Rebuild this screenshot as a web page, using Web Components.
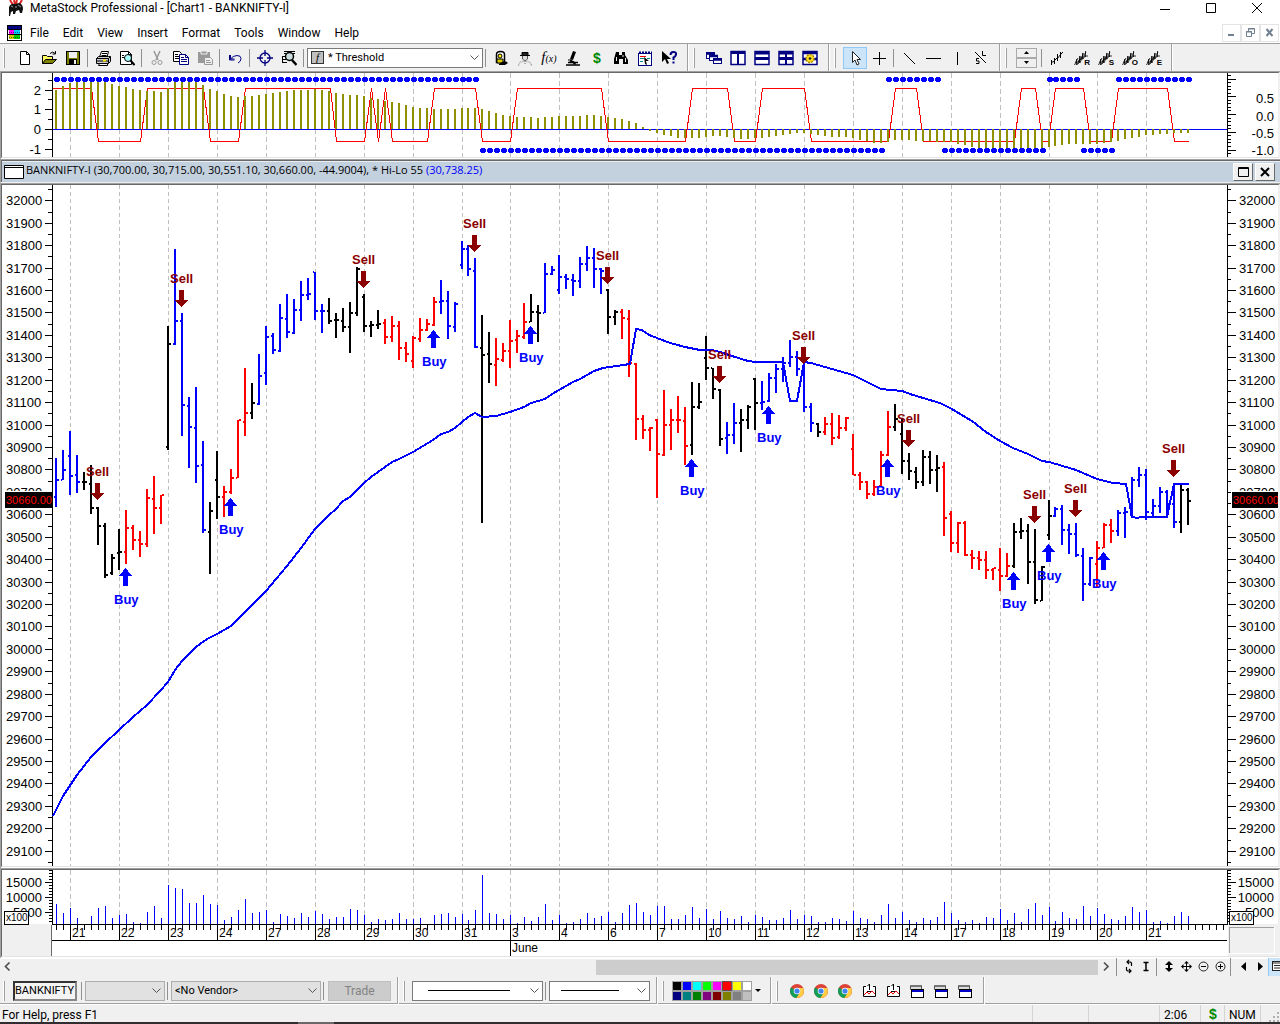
<!DOCTYPE html>
<html lang="en">
<head>
<meta charset="utf-8">
<title>MetaStock Professional - [Chart1 - BANKNIFTY-I]</title>
<style>
  html, body { margin: 0; height: 100%; background: #f0f0f0; }
  body { font: 12px/16px Roboto, "Open Sans", sans-serif; color: #000; overflow: hidden; }
</style>
</head>
<body>
<ms-app>
  <ms-title slot="head">MetaStock Professional - [Chart1 - BANKNIFTY-I]</ms-title>
  <ms-menu slot="head"></ms-menu>
  <ms-toolbar slot="head"></ms-toolbar>
  <ms-frame><ms-indicator></ms-indicator></ms-frame>
  <ms-caption>BANKNIFTY-I (30,700.00, 30,715.00, 30,551.10, 30,660.00, -44.9004), * Hi-Lo 55 <span slot="value">(30,738.25)</span></ms-caption>
  <ms-frame grow><ms-price></ms-price></ms-frame>
  <ms-frame><ms-volume></ms-volume></ms-frame>
  <ms-scroll></ms-scroll>
  <ms-orderbar></ms-orderbar>
  <ms-status>For Help, press F1</ms-status>
</ms-app>

<script>
const ICONS = {
  logo: '<path d="M2 0l3 5M6 0l1 4M9 0l-1 4M14 0l-3 5" stroke="#d22" stroke-width="2"/><path d="M1 7q2-4 6-3l4-1q4 1 4 6l-1 4h-2l-1-3-3 1-1 3H5l0-3-2 1-1 4H1z" fill="#111"/><path d="M3 6l2 1M10 5l3 2M7 7h2" stroke="#999"/>',
  chartdoc: '<rect x=".5" y=".5" width="14" height="15" fill="#fff" stroke="#000"/><rect x="1" y="1" width="13" height="3" fill="#000080"/><rect x="2" y="5" width="5" height="4" fill="#f0f"/><rect x="7" y="5" width="6" height="4" fill="#0cf"/><rect x="2" y="10" width="5" height="4" fill="#cc0"/><rect x="7" y="10" width="6" height="4" fill="#0c0"/><path d="M1 9.500h13M1 4.500h13" stroke="#000"/><path d="M2 7.500h11M2 12.500h11" stroke="#0008" stroke-dasharray="1 1"/>',
  new: '<path d="M3.500 1.500h6l3 3v10h-9z" fill="#fff" stroke="#000"/><path d="M9.500 1.500v3h3" fill="none" stroke="#000"/>',
  open: '<path d="M1.500 13.500v-8h4l1 1h5v3" fill="#ff6" stroke="#000"/><path d="M1.500 13.500l3-4h11l-4 4z" fill="#808000" stroke="#000"/><path d="M9 3.500q3-3 5 0M14.500 1v3h-3" fill="none" stroke="#000"/>',
  save: '<rect x="1.500" y="1.500" width="13" height="13" fill="#808000" stroke="#000"/><rect x="4" y="2" width="8" height="6" fill="#f0f0f0"/><rect x="4" y="9" width="8" height="5" fill="#000"/><rect x="9" y="10" width="2" height="4" fill="#f0f0f0"/>',
  print: '<path d="M4.500 7l2-5.500h7L12 7" fill="#fff" stroke="#000"/><path d="M7 3.500h5M6.500 5.500h5" stroke="#000"/><path d="M1.500 8.500l2-2h10l2 0v5l-2 2h-12z" fill="#ccc" stroke="#000"/><path d="M1.500 8.500h12v5M13.500 8.500l2-2M2 11h12" fill="none" stroke="#000"/><path d="M4.500 13.500h8v2h-9z" fill="#fff" stroke="#000"/><path d="M8 10.500h3" stroke="#fd0" stroke-width="2"/>',
  preview: '<path d="M1.500 1.500h8l3 3v10h-11z" fill="#fff" stroke="#000"/><path d="M9.500 1.500v3h3M3 5.500h2M3 7.500h2" fill="none" stroke="#000"/><circle cx="9" cy="8" r="3.500" fill="#aff" stroke="#000"/><path d="M11.500 10.500l4 4.500" stroke="#000" stroke-width="2"/>',
  cut: '<path d="M5 1l4 9M11 1L7 10" stroke="#999" stroke-width="1.500"/><circle cx="5" cy="12.500" r="2" fill="none" stroke="#999"/><circle cx="11" cy="12.500" r="2" fill="none" stroke="#999"/>',
  copy: '<path d="M.500 1.500h6l2 2v8h-8z" fill="#fff" stroke="#000"/><path d="M2 4.500h3M2 6.500h4M2 8.500h4" stroke="#000"/><path d="M6.500 4.500h6l3 3v7h-9z" fill="#fff" stroke="#000080"/><path d="M12.500 4.500v3h3M8 7.500h3M8 9.500h6M8 11.500h6" fill="none" stroke="#000080"/>',
  paste: '<path d="M1 2h12v11H1z" fill="#999"/><path d="M4 1h6v3H4z" fill="#999" stroke="#eee"/><path d="M7.500 7.500h6l2 2v5h-8z" fill="#eee" stroke="#999"/><path d="M9 10.500h4M9 12.500h5" stroke="#999"/>',
  undo: '<path d="M2.500 5v5h5" fill="none" stroke="#000080"/><path d="M3.500 5v4h4M3 9.500Q6 5.500 10 5.500q4 0 4 3 0 3-3 4.500" fill="none" stroke="#000080"/>',
  cross: '<circle cx="8" cy="8" r="5" fill="none" stroke="#000080" stroke-width="1.300"/><path d="M8 0v6M8 10v6M0 8h6M10 8h6" stroke="#000080" stroke-width="1.300"/>',
  find: '<path d="M3 1.500h11M3 3.500h2M12 3.500h2M1 6.500h3M1 9.500h4M1 12.500h5M1.500 6v7" stroke="#000"/><circle cx="8.500" cy="6.500" r="4" fill="#cdd" stroke="#000" stroke-width="1.500"/><path d="M11 10l4.500 5" stroke="#000" stroke-width="2.500"/>',
  expert: '<path d="M3.500 12.500V4.500q0-3 4-3t4 3v8z" fill="#fff" stroke="#000" stroke-width="1.500"/><circle cx="7" cy="6" r="2" fill="#fe0" stroke="#000"/><path d="M4 13V9h6v4z" fill="#dc0" stroke="#000"/><path d="M6 14q6-5 9-1l-3 2H6z" fill="#000"/>',
  person: '<path d="M3 5.500h10M5 5V2.500h6V5" stroke="#000" fill="#222"/><path d="M5.500 6v3l2.500 2 2.500-2V6" fill="#ddd" stroke="#555"/><path d="M1.500 15.500q1-4 4-4h5q3 0 4 4M8 11v4" fill="none" stroke="#999" stroke-dasharray="1 1" stroke-width="1.500"/>',
  micro: '<path d="M8 1l3 1-3 8-3-1z" fill="#000"/><path d="M3 12.500h10M1 15h14" stroke="#000" stroke-width="1.500"/><path d="M5 10.500q5 2 5 4" stroke="#000" stroke-width="2" fill="none"/><path d="M3 10h4" stroke="#000"/>',
  binoc: '<path d="M3 2h3v3h3V2h3v3l3 5v4h-5V9H6v5H1V9z" fill="#000"/><path d="M3.500 7v4M10 5v2M12.500 8v4" stroke="#eee"/>',
  report: '<rect x="1.500" y="3.500" width="13" height="12" fill="#fff" stroke="#000080"/><path d="M2 2.500h13" stroke="#000080" stroke-width="2" stroke-dasharray="2 1"/><path d="M3 6.500h6" stroke="#e00"/><path d="M3 8.500h4M10 8.500h3M3 11.500h3" stroke="#088"/><path d="M7 7l5 4H9l1 4-2-1z" fill="#000"/>',
  help: '<path d="M1 1v11l3-3 2 5 2-1-2-4h4z" fill="#000"/><path d="M9.500 5q0-3 3-3t2.500 2.500-2.500 3V10M12.500 11.500v2" stroke="#000080" stroke-width="2" fill="none"/>',
  cascade: '<g fill="#fff" stroke="#000080"><rect x=".5" y="2.500" width="8" height="6"/><rect x="3.500" y="5.500" width="8" height="5"/><rect x="7.500" y="8.500" width="8" height="5"/></g><path d="M0 3.500h9M3 6h9M7 9.500h9" stroke="#000080" stroke-width="2.500"/>',
  vert: '<rect x="1" y="1.500" width="14" height="13" fill="#fff" stroke="#000080" stroke-width="1.500"/><path d="M1 3h14M8 2v13" stroke="#000080" stroke-width="2"/>',
  horiz: '<rect x="1" y="1.500" width="14" height="13" fill="#fff" stroke="#000080" stroke-width="1.500"/><path d="M1 3h14M1 8.500h14" stroke="#000080" stroke-width="3"/>',
  grid: '<rect x="1" y="1.500" width="14" height="13" fill="#fff" stroke="#000080" stroke-width="1.500"/><path d="M1 3h14M1 8.500h14" stroke="#000080" stroke-width="3"/><path d="M8 2v13" stroke="#000080" stroke-width="2"/>',
  gear: '<rect x="1" y="1.500" width="14" height="13" fill="#fff" stroke="#000080" stroke-width="1.500"/><path d="M1 3h14M1 9h14" stroke="#000080" stroke-width="2.500"/><circle cx="8" cy="8.500" r="4" fill="#fd2" stroke="#a80" stroke-width="1.500" stroke-dasharray="2 1"/><circle cx="8" cy="8.500" r="1.300" fill="#222"/>',
  pointer: '<path d="M5.500 1.500v11l2.500-2.500 2 5 2-1-2-4.500h3.500z" fill="#fff" stroke="#222"/>',
  plus: '<path d="M8.500 2v13M2 8.500h13" stroke="#000"/>',
  diag: '<path d="M3 3l11 11" stroke="#000"/>', dash: '<path d="M1 8.500h15" stroke="#000"/>', bar: '<path d="M8.500 2v13" stroke="#000"/>',
  sl: '<path d="M2 2l11 11M9.500 1v4.500h3.500" stroke="#000" fill="none"/><path d="M6 8.500H3.500v2.500H6v2.500H3" stroke="#000" fill="none"/>',
  trend: '<path d="M2.500 15v-5M2 12.500l3-1M5.500 14V8M8.500 11V4M5 11l3-3M8 9l4-5M11.500 8V2M11 5l3-3" stroke="#000" fill="none"/>',
  trends: '<path d="M1.500 15L5 8M4 15l4-9M7 13l3-8M3.500 15V9M6.500 13V6M9.500 9V3M12.500 7V1M2 12h3l2-3h3l2-3h3M10 8l3-6M5 14l6-11" stroke="#000" stroke-width=".8" fill="none"/>',
  chrome: '<circle cx="8" cy="8" r="7" fill="#db4437"/><path d="M8 8L1.900 4.600A7 7 0 0 0 7.500 15l3.500-6z" fill="#0f9d58"/><path d="M8 8h-1l4 1-3.500 6A7 7 0 0 0 14.200 5H8z" fill="#ffcd40"/><circle cx="8" cy="8" r="3.300" fill="#fff"/><circle cx="8" cy="8" r="2.600" fill="#4285f4"/>',
  chartbox: '<path d="M5 3.500H2.500v10h12v-10H12" fill="#fff" stroke="#000"/><path d="M8.500 1v6M6.500 3l2-2M6 8.500h5" stroke="#000" fill="none"/><path d="M3 12l3-3 2 2 3-3 3 3" stroke="#e00" fill="none"/>',
  win: '<path d="M1.500 2.500h11v4h-11z" fill="#ddd" stroke="#555"/><path d="M2 3h10" stroke="#777" stroke-width="2"/><rect x="2.500" y="6.500" width="12" height="8" fill="#fff" stroke="#000"/><path d="M3 8h11" stroke="#00c" stroke-width="2"/>',
  cycle: '<path d="M6.500 4h3l1 1v3M9.500 13h-3l-1-1V9M8 2l-2 2 2 2M8 11l2 2-2 2" fill="none" stroke="#000" stroke-width="1.200"/>',
  ibeam: '<path d="M5.500 4.500h5M5.500 12.500h5M8 4.500v8" stroke="#000" stroke-width="1.500"/>',
  updown: '<path d="M8 3l4 4H4zM8 14l4-4H4z" fill="#000"/><path d="M8 4v9" stroke="#000" stroke-width="2"/>',
  move: '<path d="M8.500 4v9M4 8.500h9" stroke="#000"/><path d="M8.500 3l2.500 2.500H6zM8.500 14l2.500-2.500H6zM3 8.500L5.500 6v5zM14 8.500L11.500 6v5z" fill="#000"/>',
  zoomout: '<circle cx="8.500" cy="8.500" r="4.500" fill="none" stroke="#222"/><path d="M6 8.500h5" stroke="#000"/>',
  zoomin: '<circle cx="8.500" cy="8.500" r="4.500" fill="none" stroke="#222"/><path d="M6 8.500h5M8.500 6v5" stroke="#000"/>',
  left: '<path d="M11 4v9L6 8.500z" fill="#000"/>', right: '<path d="M6 4v9l5-4.500z" fill="#000"/>',
  props: '<rect x="3.500" y="3.500" width="12" height="9" fill="#fff" stroke="#222"/><path d="M3 5h13M5 7.500h9M5 10h9" stroke="#222"/>',
  chevleft: '<path d="M9.500 4.500l-4 4 4 4" fill="none" stroke="#505050" stroke-width="1.700"/>',
  chevright: '<path d="M6 4.500l4 4-4 4" fill="none" stroke="#505050" stroke-width="1.700"/>'
};
const svg = (name, size = 16) => `<svg viewBox="0 0 16 16" width="${size}" height="${size}" aria-hidden="true">${ICONS[name]}</svg>`;
const escapeHtml = s => s.replace(/&/g, '&amp;').replace(/</g, '&lt;').replace(/>/g, '&gt;');

class Base extends HTMLElement {
  constructor() { super(); this.attachShadow({ mode: 'open' }); }
  set html(v) { this.shadowRoot.innerHTML = v; }
}
const define = (name, cls) => customElements.define(name, cls);

define('ms-app', class extends Base {
  connectedCallback() { this.html = `<style>
    :host { display: flex; flex-direction: column; height: 100vh; min-height: 600px; }
  </style><slot name="head"></slot><slot></slot>`; }
});

define('ms-title', class extends Base {
  connectedCallback() { this.html = `<style>
    :host { display: flex; align-items: flex-start; height: 22px; background: #fff; padding-left: 8px; box-sizing: border-box; }
    .name { flex: 1; line-height: 16px; white-space: nowrap; margin-left: 6px; }
    svg { display: block; }
    button { width: 46px; height: 16px; padding: 0; border: 0; background: none; display: grid; place-items: center; }
  </style>${svg('logo')}<span class="name"><slot></slot></span>
  <button aria-label="Minimize"><svg width="11" height="11"><path d="M0 6.500h10" stroke="#000"/></svg></button>
  <button aria-label="Maximize"><svg width="11" height="11"><path d="M.5.5h9v9h-9z" fill="none" stroke="#000"/></svg></button>
  <button aria-label="Close"><svg width="11" height="11"><path d="M0 0l10 10M10 0L0 10" stroke="#000"/></svg></button>`; }
});

define('ms-menu', class extends Base {
  connectedCallback() {
    const items = ['File', 'Edit', 'View', 'Insert', 'Format', 'Tools', 'Window', 'Help'];
    this.html = `<style>
    :host { display: flex; align-items: center; height: 22px; box-sizing: border-box; background: #fff; border-bottom: 1px solid #a0a0a0; padding: 0 1px 0 7px; }
    svg { display: block; }
    nav { display: flex; flex: 1; gap: 14px; padding-left: 7px; }
    button { font: inherit; color: inherit; border: 0; background: none; padding: 0; }
    .w { width: 19px; height: 18px; border: 1px solid #e4e4e4; display: grid; place-items: center; box-sizing: border-box; }
  </style>${svg('chartdoc')}<nav>${items.map(i => `<button>${i}</button>`).join('')}</nav>
  <button class="w" aria-label="Minimize chart"><svg width="9" height="9"><path d="M1 7h6" stroke="#708090" stroke-width="2"/></svg></button>
  <button class="w" aria-label="Restore chart"><svg width="9" height="9"><path d="M2.500 3V.5h6v5H6M.5 3.500h5v5h-5zM0 4h6M2 1h7" fill="none" stroke="#708090"/></svg></button>
  <button class="w" aria-label="Close chart"><svg width="9" height="9"><path d="M1.500 1l6 7M7.500 1l-6 7" stroke="#708090" stroke-width="2"/></svg></button>`; }
});

/* One tool: a 24px wide button holding an icon, with an optional corner letter. */
define('ms-tool', class extends Base {
  connectedCallback() {
    const icon = this.getAttribute('icon'), w = this.getAttribute('w') || 24;
    this.html = `<style>
    :host { display: block; flex: none; width: ${w}px; height: 22px; }
    button { width: 100%; height: 100%; border: 0; padding: 0; background: none; display: grid; place-items: center; font: 13px/16px "Liberation Sans", sans-serif; color: #000; }
    :host([on]) button { background: #cce4f7; box-shadow: inset 0 0 0 1px #90c8f6; }
    svg, ::slotted(*) { grid-area: 1 / 1; }
    slot { display: contents; }
  </style><button aria-label="${icon}">${ICONS[icon] ? svg(icon) : ''}<slot></slot></button>`; }
});

define('ms-sep', class extends Base {
  connectedCallback() { this.html = `<style>
    :host { display: block; flex: none; width: 6px; height: 18px; box-sizing: border-box; }
    i { display: block; width: 1px; height: 100%; margin-left: 2px; background: #909090; }
  </style><i></i>`; }
});

/* Band edge: a full height line and the grip of the next band. */
define('ms-band', class extends Base {
  connectedCallback() { this.html = `<style>
    :host { display: flex; flex: none; width: 21px; align-self: stretch; align-items: center; box-sizing: border-box; padding-left: 6px; gap: 6px; }
    :host([first]) { width: 13px; padding-left: 4px; }
    :host([first]) .edge, :host([last]) .grip { display: none; }
    .edge { width: 1px; height: 100%; background: #a0a0a0; box-shadow: 1px 0 #fff; }
    .grip { width: 1px; height: 20px; background: #a0a0a0; box-shadow: -1px 0 #fff; }
  </style><i class="edge"></i><i class="grip"></i>`; }
});

/* Drop-down: the native select with a chevron and any slotted decoration laid in the same grid cell. */
define('ms-select', class extends Base {
  connectedCallback() {
    const g = n => this.getAttribute(n);
    this.html = `<style>
    :host { display: grid; flex: none; width: ${g('w')}px; height: 20px; align-items: center; }
    select, svg, ::slotted(*) { grid-area: 1 / 1; }
    select { appearance: none; width: 100%; height: 100%; margin: 0; border: 1px solid ${g('border') || '#7a7a7a'}; border-radius: 0; background: ${g('bg') || '#fff'};
      font: 11px/16px Roboto, sans-serif; color: #000; padding: 0 18px 0 ${g('pad') || 4}px; }
    svg { justify-self: end; margin-right: 4px; pointer-events: none; }
    ::slotted(*) { pointer-events: none; }
  </style><select aria-label="${g('label')}"><option>${escapeHtml(g('value') || '')}</option></select>
  <svg width="9" height="6"><path d="M.5.500l4 4 4-4" fill="none" stroke="#555"/></svg><slot></slot>`; }
});

const tools = (...names) => names.map(n => n === '|' ? '<ms-sep></ms-sep>' : `<ms-tool icon="${n}"></ms-tool>`).join('');

define('ms-toolbar', class extends Base {
  connectedCallback() {
    const tl = c => `<ms-tool icon="trends"><b>${c}</b></ms-tool>`;
    this.html = `<style>
    :host { display: flex; align-items: center; height: 27px; background: #f0f0f0; flex: none; }
    .f { width: 11px; height: 11px; margin-left: 4px; background: #c0c0c0; border: 1px solid #333; font: italic 11px/11px "Liberation Serif", serif; text-align: center; }
    .fx { font: italic 15px/16px "Liberation Serif", serif; }
    .fx small { font-size: 10px; }
    .dollar { font: bold 14px/16px "Liberation Sans", sans-serif; color: #008800; }
    b { font: bold 8px/8px "Liberation Sans", sans-serif; align-self: end; justify-self: end; margin: 0 3px 2px 0; }
    .spin { width: 21px; height: 20px; margin: 0 2px; display: flex; flex-direction: column; }
    .spin button { flex: 1; border: 1px solid #aaa; padding: 0; background: #f0f0f0; display: grid; place-items: center; }
  </style><ms-band first></ms-band>${tools('new', 'open', 'save', '|', 'print', 'preview', '|', 'cut', 'copy', 'paste', '|', 'undo', '|', 'cross', 'find', '|')}
  <ms-select w="176" pad="20" label="Template" value="* Threshold"><span class="f">f</span></ms-select><ms-sep></ms-sep>
  ${tools('expert', 'person')}<ms-tool icon="function"><span class="fx">f<small>(x)</small></span></ms-tool>${tools('micro')}<ms-tool icon="dollar"><span class="dollar">$</span></ms-tool>${tools('binoc', 'report', 'help')}
  <ms-band></ms-band>${tools('cascade', 'vert', 'horiz', 'grid', 'gear')}<ms-band></ms-band>
  <ms-tool icon="pointer" on></ms-tool>${tools('plus', '|', 'diag', 'dash', 'bar', 'sl')}<ms-band></ms-band>
  <div class="spin"><button aria-label="Up"><svg width="5" height="3"><path d="M0 3l2.500-3L5 3z"/></svg></button><button aria-label="Down"><svg width="5" height="3"><path d="M0 0l2.500 3L5 0z"/></svg></button></div><ms-sep></ms-sep>
  ${tools('trend')}${tl('R')}${tl('S')}${tl('O')}${tl('E')}<ms-band last></ms-band>`; }
});

define('ms-frame', class extends Base {
  connectedCallback() { this.html = `<style>
    :host { display: flex; flex: none; box-sizing: border-box; border-top: 1px solid #a0a0a0; border-left: 1px solid #a0a0a0; background: #fff; }
    :host([grow]) { flex: 1; min-height: 0; }
    div { display: flex; flex: 1; min-width: 0; border-top: 1px solid #696969; border-left: 1px solid #696969; border-bottom: 1px solid #e3e3e3; border-right: 2px solid #f0f0f0; margin-bottom: 1px; }
    ::slotted(*) { flex: 1; min-width: 0; }
  </style><div><slot></slot></div>`; }
});

define('ms-caption', class extends Base {
  connectedCallback() { this.html = `<style>
    :host { display: flex; flex: none; align-items: center; height: 24px; box-sizing: border-box; border-top: 1px solid #a0a0a0; border-bottom: 1px solid #f0f0f0; border-left: 1px solid #a0a0a0; background: #c3d0de; box-shadow: inset 0 1px #696969, inset 1px 0 #696969, inset 0 2px #e8eef4; padding: 1px 5px 0 3px; gap: 2px; }
    .doc { display: block; flex: none; }
    span { flex: 1; white-space: pre; font: 11px/16px "Open Sans", "Noto Sans", sans-serif; margin-top: -3px; }
    ::slotted(*) { color: #00f; }
    button { width: 20px; height: 18px; padding: 0; background: #f0f0f0; border: 1px solid; border-color: #fff #696969 #696969 #fff; display: grid; place-items: center; }
  </style><svg class="doc" width="20" height="14"><path d="M.5.500h19v13H.5zM0 2.500h20" fill="#fff" stroke="#000"/></svg>
  <span><slot></slot><slot name="value"></slot></span>
  <button aria-label="Maximize pane"><svg width="11" height="10"><path d="M.5.500h10v9H.5zM0 1.500h11" fill="none" stroke="#000"/></svg></button>
  <button aria-label="Close pane"><svg width="10" height="10"><path d="M1 1l8 8M9 1L1 9" stroke="#000" stroke-width="2"/></svg></button>`; }
});

/* ---------- chart data ---------- */
const BARS = 163;
/* High, low, open, close per bar, in thirds of a pixel below the pane's top. */
const PRICES = [
 [0, `b820,965,937,885 b795,884,884,855 b738,930,812,872 b810,924,870,890 k862,914,890,892 k840,986,898,970 k965,1080,970,1022 k1014,1178,1022,1170 k1106,1170,1165,1118 k1032,1155,1103,1100 r976,1136,1101,1028 r1020,1095,1028,1065 r1038,1115,1065,1077 r912,1086,1077,938 r873,1046,941,968 r930,1018,968,930 k424,795,786,477 b192,480,477,408 b384,752,408,660 b636,849,663,727 b606,893,729,842 b768,1044,839,1034 k950,1167,1040,977 k798,1002,884,936 r903,996,936,921 r852,928,921,879 r704,880,879,705 r549,752,710,684 k594,702,684,654 b507,659,657,573 b423,600,563,456 b444,507,453,495 b357,500,497,399 b327,459,402,440 b342,446,443,375 b288,408,375,329 b279,345,329,326 b260,405,260,378 b357,444,378,378 k339,416,378,408 k384,459,405,405 k369,440,408,426 k351,504,426,384 k246,392,384,252 k327,440,336,423 k408,456,423,420 k375,431,420,417 r402,476,414,456 r393,470,456,423 r408,525,423,489 r471,531,489,507 r453,549,528,459 r399,470,462,434 r402,437,434,417 r336,422,420,350 b285,386,350,348 b318,461,348,423 b350,440,426,356 b168,251,240,191 b180,273,191,251 b219,488,258,486 k390,1014,489,509 k440,594,507,537 r459,602,540,521 r474,530,525,498 r405,549,498,467 r435,503,465,453 r354,462,455,410 k327,412,410,381 k360,471,381,383 b234,385,383,267 b243,271,267,254 b210,327,315,275 b267,311,275,282 b267,333,285,288 b216,308,288,237 b183,257,237,218 b189,309,218,251 b249,327,251,258 k312,446,315,396 k375,420,396,380 r372,461,380,400 r375,575,402,535 r534,765,537,702`],
 [375, `r315,386,327,360 r351,423,360,354 r328,564,330,432 r240,437,435,345 r297,419,345,330 r258,369,330,330 r291,465,333,408 k216,434,405,291 k219,296,291,276 k78,209,144,174 k174,266,174,237 k237,407,240,387 b336,431,384,375 b279,402,375,339 k297,426,339,330 k285,356,330,291 k204,360,207,279 b213,300,279,276 b188,276,273,204 b162,249,204,177 b141,216,177,159 b90,170,159,141 b123,198,141,177 b165,305,177,291 b279,366,291,338 k339,381,341,366 r321,375,366,342 r309,405,342,384 r315,387,381,354 r321,363,354,324 r372,495,417,495 r486,540,495,516 r513,567,516,552 r510,558,552,531 r423,530,528,435 r303,437,435,350 k282,363,350,327 k327,492,372,453 k429,510,453,483 k471,537,486,516 k420,528,516,441 k423,522,441,480 k435,546,480,474`],
 [585, `r246,467,260,414 r393,516,402,489 r426,518,488,428 r423,528,428,524 r510,567,524,535 r513,570,535,540 r513,597,540,570 r563,600,570,564 r504,633,570,588 r519,591,588,558 k429,564,558,456 k414,477,456,453 k432,612,453,546 k447,671,546,660 k558,663,662,560 k360,480,465,408 b381,411,408,387 b375,495,387,450 b432,522,450,462 b429,531,462,525 b504,663,528,612 b531,617,612,534 r483,624,552,504 r429,505,504,435 r417,489,435,453 b390,468,453,399 b381,474,399,396 b291,411,405,300 b261,321,300,285 b267,420,285,396 b357,414,400,378 b321,399,378,336 b330,405,336,372 b312,444,372,426 k312,459,426,330 k324,435,330,363`]
].flatMap(([base, s]) => s.split(' ').map(t => [t[0], ...t.slice(1).split(',').map(v => (+v + base) / 3)]));

const HILO = '53,815 63,795 77,774 91,756 105,742 119,729 133,716 147,704 161,689 168,681 175,669 182,660 196,646 207,638 217,633 231,625 245,611 266,590 287,565 301,547 315,528 329,514 336,508 343,500 350,496 364,482 371,476 392,461 399,458 413,451 433,439 441,433 448,431 455,427 468,416 475,412 482,416 496,415 510,411 524,406 531,402 545,398 552,393 559,389 573,381 580,378 594,370 603,367 630,363 636,328 642,329 649,334 657,337 670,342 685,346 700,349 712,349 720,351 735,356 748,360 756,361 783,361 790,400 797,400 804,361 811,362 853,374 881,388 902,390 913,394 940,402 950,407 972,420 986,431 1000,440 1013,447 1028,453 1042,460 1049,461 1056,463 1076,469 1097,478 1113,482 1126,483 1132,516 1138,517 1140,516 1167,516 1174,483 1189,483'.split(' ').map(p => p.split(',').map(Number));

const HIST = [60,48,39,33,30,27,30,36,42,48,51,57,60,63,63,66,54,36,30,33,36,45,57,63,72,78,81,78,78,75,72,69,66,63,60,60,60,57,60,63,69,72,75,75,78,84,87,93,96,99,105,111,114,114,117,117,117,117,114,114,114,117,123,129,135,138,141,141,141,144,141,141,138,138,138,138,135,135,138,141,144,147,153,159,171,182,189,194,198,204,204,204,204,201,198,198,201,204,207,207,204,204,201,198,195,192,189,189,192,195,198,201,201,201,204,210,213,219,218,216,210,210,210,213,213,213,216,216,216,222,225,231,234,237,240,243,243,240,243,240,240,237,231,228,225,222,222,222,222,222,219,216,213,207,204,201,195,195,192,192,189,189,189].map(v => v / 3 - 3);

const VOL = [162,189,174,204,222,198,174,168,204,195,192,216,219,186,168,204,105,114,117,159,159,135,162,165,210,201,180,147,189,186,180,216,192,198,204,189,201,183,192,207,201,201,177,180,195,216,207,210,207,189,207,207,204,222,195,192,189,201,192,210,180,75,189,192,207,195,219,201,213,201,162,210,195,219,216,207,189,204,198,186,216,189,165,159,186,195,168,168,207,207,195,171,204,177,207,183,204,207,198,216,195,201,210,210,204,180,207,195,198,216,216,204,207,213,183,204,207,216,195,162,204,186,210,216,204,210,201,156,189,210,216,210,219,201,204,177,210,189,216,177,159,195,171,213,186,204,207,168,198,174,192,207,210,198,171,186,180,216,213,219,198,186,198].map(v => (222 - v) / 3);

const DAYS = ['21','22','23','24','27','28','29','30','31','3','4','6','7','10','11','12','13','14','17','18','19','20','21'];
const COLORS = { b: '#0000ff', k: '#000000', r: '#ff0000' };
const FONT = 'font-family="Liberation Sans, sans-serif"';

const rect = (x, y, w, h, c) => `<rect x="${x}" y="${y}" width="${w}" height="${h}" fill="${c}"/>`;
const text = (x, y, s, extra = '') => `<text x="${x}" y="${y}" font-size="13" ${FONT} ${extra}>${s}</text>`;
const line = (pts, c, w = 1) => `<polyline points="${pts.map(p => p.join(',')).join(' ')}" fill="none" stroke="${c}" stroke-width="${w}"/>`;

/* A pane that redraws itself for its own size. Coordinates start at the pane's inner left edge. */
class Pane extends Base {
  connectedCallback() {
    this.html = `<style>:host { display: block; height: ${this.constructor.h || 'auto'}; min-height: 0; overflow: hidden; } svg { display: block; }</style><svg></svg>`;
    this.svg = this.shadowRoot.querySelector('svg');
    new ResizeObserver(() => this.redraw()).observe(this);
    this.redraw();
  }
  redraw() {
    const W = this.clientWidth, H = this.clientHeight;
    if (!W || !H) return;
    this.svg.setAttribute('width', W);
    this.svg.setAttribute('height', H);
    this.L = 50; this.R = W - 51;
    this.pitch = (this.R - this.L) * 6.9881 / 1175;
    this.svg.innerHTML = this.draw(W, H);
  }
  x(i) { return Math.floor(this.L + 4.700 + this.pitch * i); }
  grid(h, dash) {
    return DAYS.map((d, k) => `<path d="M${this.x(2 + 7 * k) + .5} 0V${h}" stroke="#c0c0c0" stroke-dasharray="${dash}"/>`).join('');
  }
  crisp(s) { return `<g shape-rendering="crispEdges">${s}</g>`; }
  sx(px) { return this.L + (px - 52) * (this.R - this.L) / 1175; }
}

define('ms-indicator', class extends Pane {
  static h = '84px';
  draw(W, H) {
    let s = this.grid(H, '5 3'), t = '';
    const hi = 15.500, lo = 68.500;
    const red = [[52,0],[91,0],[98,1],[140,1],[147,0],[203,0],[210,1],[238,1],[245,0],[330,0],[336,1],[364,1],[371,0],[378,1],[385,0],[392,1],[427,1],[434,0],[475,0],[482,1],[510,1],[517,0],[601,0],[608,1],[685,1],[692,0],[727,0],[734,1],[755,1],[762,0],[804,0],[811,1],[888,1],[895,0],[916,0],[923,1],[1014,1],[1021,0],[1035,0],[1042,1],[1048,1],[1055,0],[1083,0],[1090,1],[1111,1],[1118,0],[1167,0],[1174,1],[1188,1]];
    s += rect(this.L, 56, this.R - this.L, 1, '#0000ff');
    s += line(red.map(([x, v]) => [this.sx(x) + .5, v ? lo : hi]), '#ff0000');
    HIST.forEach((v, i) => { const y = Math.round(v), z = 56; s += rect(this.x(i) - 1, Math.min(y, z), 2, Math.max(1, Math.abs(z - y)), '#909000'); });
    let dots = '';
    const top = i => i <= 60 || (i >= 119 && i <= 126) || (i >= 142 && i <= 146) || i >= 152;
    for (let i = 0; i < BARS; i++) dots += rect(this.x(i) - 1, top(i) ? 4 : 75, 4, 5, '#00f') + rect(this.x(i) - 2, top(i) ? 5 : 76, 6, 3, '#00f');
    s += dots + rect(this.L, 0, 1, H, '#000') + rect(this.R, 0, 1, H, '#000');
    [17, 36, 56, 76].forEach((y, k) => { s += rect(this.L - 7, y, 7, 1, '#000') + rect(this.L - 4, y - 10, 4, 1, '#000'); t += text(this.L - 11, y + 5, 2 - k, 'text-anchor="end"'); });
    for (let k = -1; k <= 21; k++) s += rect(this.R, Math.floor(6 + k * 3.550), k % 5 ? 4 : 9, 1, '#000');
    [30, 48, 65, 82].forEach((y, k) => t += text(W - 4, y, ['0.5', '0.0', '-0.5', '-1.0'][k], 'text-anchor="end"'));
    return this.crisp(s) + t;
  }
});

define('ms-price', class extends Pane {
  draw(W, H) {
    const k = H / 681;
    let s = this.grid(H, '4 3'), t = '';
    for (let n = -1; n <= 60; n++) {
      const y = Math.floor((15.800 + n * 11.215) * k), major = n % 2 === 0;
      s += rect(this.L - (major ? 7 : 4), y, major ? 7 : 4, 1, '#000') + rect(this.R, y, major ? 9 : 4, 1, '#000');
      if (major && n <= 58) { const v = 32000 - n * 50; t += text(4, y + 5, v) + text(W - 39, y + 5, v); }
    }
    s += rect(this.L, 0, 1, H, '#000') + rect(this.R, 0, 1, H, '#000');
    PRICES.forEach(([c, h, l, o, cl], i) => {
      const x = this.x(i), f = COLORS[c], r = v => Math.round(v * k);
      s += rect(x - 1, r(h), 2, Math.max(2, r(l) - r(h)), f) + rect(x - 2, r(o) - 1, 1, 2, f) + rect(x + 1, r(cl) - 1, 2, 2, f);
    });
    s += line(HILO.map(([x, y]) => [this.sx(x), (y - 184) * k]), '#0000ff', 2);
    [[97,298],[181,105],[363,86],[474,50],[607,82],[719,181],[803,162],[908,245],[1034,321],[1075,315],[1173,275]].forEach(([px, py]) => {
      const x = Math.round(this.sx(px)), y = Math.round(py * k);
      s += `<path d="M${x - 2} ${y}h5v10h4l-6.500 7.500l-6.500-7.500h4z" fill="#8b0000"/>`;
      t += text(x - 11, y - 7, 'Sell', 'font-weight="bold" fill="#8b0000"');
    });
    [[125,383],[230,313],[433,145],[530,141],[691,274],[768,221],[887,274],[1013,387],[1048,359],[1103,367]].forEach(([px, py]) => {
      const x = Math.round(this.sx(px)), y = Math.round(py * k);
      s += `<path d="M${x - 2} ${y + 18}h5v-10h4l-6.500-8l-6.500 8h4z" fill="#0000ff"/>`;
      t += text(x - 11, y + 36, 'Buy', 'font-weight="bold" fill="#0000ff"');
    });
    const by = Math.round(307 * k);
    const box = [3, W - 46].map(x => rect(x - 1, by - 1, 48, 18, '#fff') + rect(x, by, 47, 16, '#000') + `<text x="${x + 1}" y="${by + 12}" font-size="11" ${FONT} fill="#f00">30660.00</text>`).join('');
    return this.crisp(s) + t + box;
  }
});

define('ms-volume', class extends Pane {
  static h = '86px';
  draw(W, H) {
    const { L, R } = this;
    let s = this.grid(54, '5 3'), t = '';
    s += rect(0, 54, L, H - 54, '#f0f0f0') + rect(R + 1, 54, W - R, H - 54, '#f0f0f0') + rect(L - 1, 55, 1, H - 55, '#696969');
    s += rect(R + 2, 57, 46, 1, '#a0a0a0') + rect(R + 2, 57, 1, 26, '#a0a0a0') + rect(R + 2, 83, 46, 1, '#fff') + rect(R + 47, 57, 1, 26, '#fff');
    VOL.forEach((v, i) => { s += rect(this.x(i), 54 - Math.round(v), 1, Math.round(v), '#0000ff'); });
    for (let n = 0; n < 168; n++) s += rect(this.x(n), 55, 1, 5, '#000');
    s += rect(L, 54, R - L, 1, '#000') + rect(L, 70, R - L, 1, '#000') + rect(L, 0, 1, 55, '#000') + rect(R, 0, 1, 55, '#000');
    DAYS.forEach((d, k) => { const x = this.x(2 + 7 * k); s += rect(x, 55, 1, 16, '#000'); t += `<text x="${x + 2}" y="67" font-size="12" ${FONT}>${d}</text>`; });
    const jx = this.x(65);
    s += rect(jx, 71, 1, 15, '#000');
    t += text(jx + 2, 82, 'June', 'style="font-size:12px"');
    for (let n = 0; n < 18; n++) { const y = 51 - n * 3, m = [12, 27, 42].includes(y); s += rect(L - (m ? 7 : 3), y, m ? 7 : 3, 1, '#000') + rect(R, y, m ? 9 : 4, 1, '#000'); }
    [15000, 10000, 5000].forEach((v, n) => { t += text(L - 10, 17 + n * 15, v, 'text-anchor="end"') + text(W - 4, 17 + n * 15, v, 'text-anchor="end"'); });
    const tag = x => `<rect x="${x + .5}" y="41.500" width="24" height="13" fill="#fff" stroke="#000"/><text x="${x + 2}" y="51" font-size="10" ${FONT}>x100</text>`;
    return this.crisp(s) + t + tag(2) + tag(R + 2);
  }
});

define('ms-scroll', class extends Base {
  connectedCallback() { this.html = `<style>
    :host { display: flex; flex: none; align-items: center; height: 18px; background: #f0f0f0; box-shadow: inset 0 1px #fff; overflow: hidden; }
    .track { flex: 1; display: flex; height: 15px; }
    .track::before { content: ""; flex: 580; }
    .track i { flex: 502; background: #cdcdcd; }
    .rest { margin-right: -5px; display: flex; align-items: center; }
    ms-tool { margin-top: -2px; }
  </style><ms-tool icon="chevleft" w="16"></ms-tool><div class="track"><i></i></div><ms-tool icon="chevright" w="16"></ms-tool>
  <div class="rest"><ms-sep></ms-sep>${['cycle', 'ibeam'].map(n => `<ms-tool icon="${n}" w="17"></ms-tool>`).join('')}<ms-sep></ms-sep>${['updown', 'move', 'zoomout', 'zoomin'].map(n => `<ms-tool icon="${n}" w="17"></ms-tool>`).join('')}<ms-sep></ms-sep>${['left', 'right'].map(n => `<ms-tool icon="${n}" w="17"></ms-tool>`).join('')}<ms-tool icon="props" w="17" on></ms-tool></div>`; }
});

define('ms-orderbar', class extends Base {
  connectedCallback() {
    const sw = ['#000','#00f','#0ff','#0f0','#f0f','#f00','#ff0','#fff','#000080','#008080','#008000','#800080','#800000','#808000','#808080','#c0c0c0'];
    this.html = `<style>
    :host { display: flex; flex: none; align-items: center; height: 29px; box-sizing: border-box; background: #f0f0f0; border-bottom: 1px solid #fff; box-shadow: inset 0 -1px #a0a0a0; padding-top: 1px; }
    input { width: 64px; height: 20px; margin: 0 2px 0 0; box-sizing: border-box; border: 2px inset #888; border-radius: 0; background: #f4f4f4; padding: 0; font: 11px/16px Roboto, sans-serif; color: #000; }
    .trade { width: 63px; height: 20px; margin-left: 1px; border: 1px solid #bfbfbf; background: #ccc; color: #838383; font: 12px/16px Roboto, sans-serif; padding: 0; }
    .ln { height: 1px; background: #000; margin-left: 16px; }
    .pal { display: grid; grid-template-columns: repeat(8, 10px); margin-left: 1px; }
    .pal button { width: 10px; height: 10px; padding: 0; border: 1px solid #a0a0a0; }
    .pal button.sel { border: 1px dashed #555; }
    .gap { width: 3px; }
  </style><ms-band first></ms-band><input aria-label="Symbol" value="BANKNIFTY"><ms-sep></ms-sep>
  <ms-select w="80" bg="#e1e1e1" border="#adadad" label="Security"></ms-select><ms-sep></ms-sep>
  <ms-select w="150" bg="#e1e1e1" border="#adadad" pad="3" label="Vendor" value="&lt;No Vendor&gt;"></ms-select><ms-sep></ms-sep>
  <button class="trade" disabled>Trade</button><ms-band></ms-band>
  <ms-select w="131" label="Line style"><div class="ln" style="width:82px"></div></ms-select><ms-sep></ms-sep>
  <ms-select w="101" label="Line weight"><div class="ln" style="width:58px;margin-left:12px"></div></ms-select><ms-band></ms-band>
  <div class="pal">${sw.map((c, i) => `<button aria-label="Colour ${i + 1}" style="background:${c}"${i === 5 ? ' class="sel"' : ''}></button>`).join('')}</div>
  <i class="gap"></i><svg width="6" height="3"><path d="M0 0h6L3 3z"/></svg><i class="gap"></i><ms-band></ms-band>
  ${tools('chrome', 'chrome', 'chrome', 'chartbox', 'chartbox', 'win', 'win', 'win')}<ms-band last></ms-band>`; }
});

define('ms-status', class extends Base {
  connectedCallback() { this.html = `<style>
    :host { display: flex; flex: none; flex-direction: column; height: 19px; background: #f0f0f0; white-space: nowrap; }
    .row { display: flex; height: 17px; padding-left: 2px; }
    .msg { flex: 1; }
    .row > span { line-height: 20px; }
    .c { border-left: 1px solid #d4d4d4; box-sizing: border-box; padding-left: 4px; }
    b { font: bold 14px/19px "Liberation Sans", sans-serif; color: #008800; }
    svg { display: block; }
    .edge { display: flex; height: 2px; background: #302c30; }
    .edge i { margin-left: 298px; width: 36px; background: #6a666a; }
  </style><div class="row"><span class="msg"><slot></slot></span><span class="c" style="width:56px"></span><span class="c" style="width:71px"></span>
  <span class="c" style="width:41px">2:06</span><span class="c" style="width:24px;padding-left:8px"><b>$</b></span><span class="c" style="width:36px">NUM</span>
  <span class="c" style="width:20px;padding-left:7px"><svg width="12" height="17"><path d="M9 7h2v2H9zM9 11h2v2H9zM5 11h2v2H5zM9 15h2v2H9zM5 15h2v2H5zM1 15h2v2H1z" fill="#b0b0b0"/></svg></span></div><div class="edge"><i></i></div>`; }
});
</script>
</body>
</html>
